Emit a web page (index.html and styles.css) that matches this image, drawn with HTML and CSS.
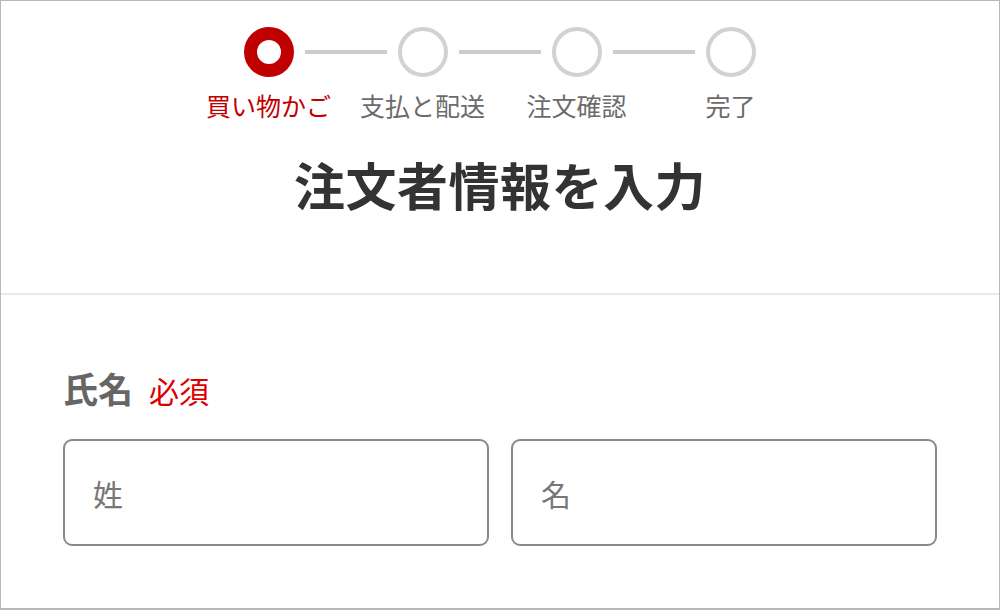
FILE: index.html
```html
<!DOCTYPE html>
<html lang="ja">
<head>
<meta charset="utf-8">
<title>注文者情報を入力</title>
<link rel="stylesheet" href="styles.css">
</head>
<body>
<div class="frame">
  <header class="head">
    <div class="steps">
      <div class="step-track">
        <span class="dot dot-active"></span>
        <span class="bar"></span>
        <span class="dot"></span>
        <span class="bar"></span>
        <span class="dot"></span>
        <span class="bar"></span>
        <span class="dot"></span>
      </div>
      <div class="step-labels">
        <span class="label label-active">買い物かご</span>
        <span class="label">支払と配送</span>
        <span class="label">注文確認</span>
        <span class="label">完了</span>
      </div>
    </div>
    <h1 class="title">注文者情報を入力</h1>
  </header>
  <section class="form">
    <div class="field-label">
      <span class="field-name">氏名</span>
      <span class="required">必須</span>
    </div>
    <div class="name-row">
      <input class="text-input" type="text" placeholder="姓">
      <input class="text-input" type="text" placeholder="名">
    </div>
  </section>
</div>
</body>
</html>
```
FILE: styles.css
```css
* { box-sizing: border-box; }
html, body { margin: 0; padding: 0; background: #fff; }
body {
  font-family: "Noto Sans CJK JP", "Noto Sans", sans-serif;
}
.frame {
  width: 1000px;
  height: 610px;
  border: 1px solid #b8b8b8;
  border-bottom-width: 2px;
  background: #fff;
  overflow: hidden;
}
.head {
  padding-top: 26px;
  border-bottom: 2px solid #e8e8e8;
  height: 294px;
}
.steps {
  display: flex;
  flex-direction: column;
  align-items: center;
}
.step-track {
  display: flex;
  align-items: center;
  gap: 11px;
  margin-left: -1px;
}
.dot {
  width: 50px;
  height: 50px;
  border-radius: 50%;
  border: 4px solid #d2d2d2;
  background: #fff;
}
.dot-active {
  border: 13px solid #c00000;
}
.bar {
  width: 82px;
  height: 4px;
  background: #cccccc;
}
.step-labels {
  display: grid;
  grid-template-columns: repeat(4, 154px);
  margin-top: 13px;
  margin-left: -1px;
}
.label {
  text-align: center;
  font-size: 25px;
  line-height: 30px;
  color: #6b6b6b;
  white-space: nowrap;
}
.label-active { color: #c00000; }
.title {
  margin: 34px 0 0;
  text-align: center;
  font-size: 51px;
  letter-spacing: 0.5px;
  line-height: 60px;
  font-weight: 700;
  color: #333;
}
.form {
  padding: 73px 62px 0 62px;
}
.field-label {
  display: flex;
  align-items: baseline;
  gap: 16px;
  line-height: 40px;
}
.field-name {
  font-size: 35px;
  font-weight: 700;
  color: #666;
}
.required {
  font-size: 30px;
  color: #dd0000;
}
.name-row {
  display: grid;
  grid-template-columns: 1fr 1fr;
  gap: 22px;
  margin-top: 29px;
}
.text-input {
  display: block;
  width: 100%;
  height: 107px;
  border: 2px solid #8a8a8a;
  border-radius: 9px;
  padding: 0 0 0 28px;
  font-family: "Noto Sans CJK JP", "Noto Sans", sans-serif;
  font-size: 30px;
  color: #333;
  background: #fff;
  outline: none;
}
.text-input::placeholder { color: #777; opacity: 1; }
```
